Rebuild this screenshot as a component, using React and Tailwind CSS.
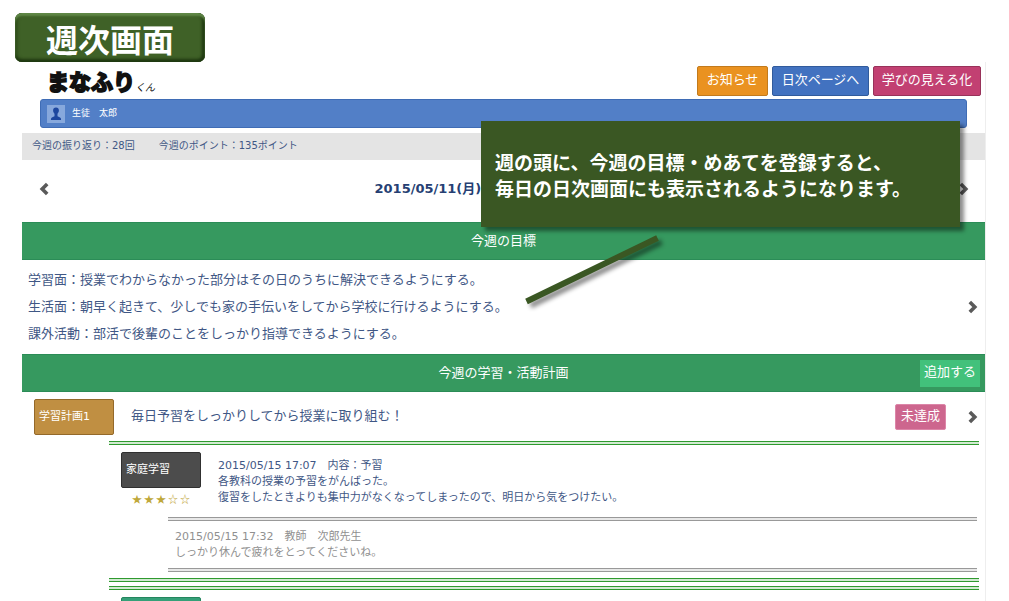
const goals = [
  '学習面：授業でわからなかった部分はその日のうちに解決できるようにする。',
  '生活面：朝早く起きて、少しでも家の手伝いをしてから学校に行けるようにする。',
  '課外活動：部活で後輩のことをしっかり指導できるようにする。',
]

const stars = ['★', '★', '★', '☆', '☆']

function Chevron({ left = false }) {
  return (
    <svg viewBox="0 0 10 14" className="block h-[14px] w-[10px]" fill="none" stroke="#5a5a5a" strokeWidth="3.600" aria-hidden="true">
      <path d={left ? 'M8.200 2 L3.200 7 L8.200 12' : 'M1.800 2 L6.800 7 L1.800 12'} />
    </svg>
  )
}

function NavLink({ className, children }) {
  return (
    <a href="#" className={`flex h-[30px] items-center justify-center rounded-[2px] border pb-[2px] text-[13px] text-white ${className}`}>
      {children}
    </a>
  )
}

function Band({ title, children }) {
  return (
    <div className="relative flex h-[38px] items-center justify-center border-y border-[#2b8c57] bg-[#36995f] text-[13px] text-white">
      <h2>{title}</h2>
      {children}
    </div>
  )
}

function Tag({ className, children }) {
  return (
    <button type="button" className={`block h-9 w-20 rounded-[2px] border pl-1 text-left text-[11px] text-white ${className}`}>
      {children}
    </button>
  )
}

function DoubleRule({ className }) {
  return <div className={`h-1 border-y ${className}`} />
}

export default function App() {
  return (
    <div className="relative h-screen overflow-hidden bg-white font-['DejaVu_Sans','Noto_Sans_CJK_JP',sans-serif] text-[#3f5785]">
      <div className="pl-[15px] pt-[13px]">
        <h1 className="flex h-[49px] w-[190px] items-center justify-center rounded-[7px] bg-[#3f6127] font-['Noto_Sans_CJK_JP',sans-serif] text-[32px] font-bold leading-none text-white shadow-[inset_0_3px_2px_#5f8746,inset_0_-3px_3px_#1f3811,inset_-3px_0_3px_#1f3811,inset_3px_0_3px_#34531f]">
          週次画面
        </h1>
      </div>

      <main className="ml-[22px] mr-[23px] border-r border-[#eeeeee]">
        <header className="flex items-start justify-between pl-[25px] pr-1 pt-1">
          <div className="flex items-end font-['Noto_Sans_CJK_JP',sans-serif] text-[#111111]">
            <span className="text-[22px] font-bold leading-[28px] [-webkit-text-stroke:2px_#111111]">まなふり</span>
            <span className="text-[10px] italic leading-[14px]">くん</span>
          </div>
          <nav className="flex gap-1">
            <NavLink className="w-[71px] border-[#c27a1c] bg-[#ea9220]">お知らせ</NavLink>
            <NavLink className="w-[97px] border-[#315b9c] bg-[#4272c0]">日次ページへ</NavLink>
            <NavLink className="w-[108px] border-[#98325a] bg-[#c24072]">学びの見える化</NavLink>
          </nav>
        </header>

        <div className="ml-[18px] mr-[18px] mt-[3px] flex h-[29px] items-center gap-[7px] rounded-[3px] border border-[#3f6cb5] bg-[#527fc7] pl-[6px] text-[9px] text-white">
          <svg viewBox="0 0 18 18" className="size-[18px]" aria-hidden="true">
            <rect width="18" height="18" fill="#87a8dc" />
            <path d="M9 2.600c1.900 0 2.900 1.300 2.900 3 0 1.500-.7 2.400-1.400 3.100v2.600c1.500.5 3 1.400 3.400 2.100.2.400.2 1 .1 1.600H4c-.1-.6-.1-1.200.1-1.600.4-.7 1.900-1.600 3.400-2.100V8.700C6.800 8 6.100 7.100 6.100 5.600c0-1.700 1-3 2.900-3z" fill="#1d479f" />
          </svg>
          <span>生徒　太郎</span>
        </div>

        <div className="mt-[5px] flex h-[27px] items-center gap-6 bg-[#e4e4e4] pb-[2px] pl-[10px] text-[10px]">
          <span>今週の振り返り：28回</span>
          <span>今週のポイント：135ポイント</span>
        </div>

        <div className="flex h-[62px] items-center pb-1 pl-[17px] pr-4">
          <button type="button" aria-label="前の週"><Chevron left /></button>
          <span className="grow pl-[35%] text-[13px] font-bold text-[#263f73]">2015/05/11(月)</span>
          <button type="button" aria-label="次の週"><Chevron /></button>
        </div>

        <section>
          <Band title="今週の目標" />
          <div className="flex items-center justify-between pb-[7px] pl-[6px] pr-[7px] pt-[6px]">
            <ul className="text-[13px] leading-[27px]">
              {goals.map((goal) => <li key={goal}>{goal}</li>)}
            </ul>
            <button type="button" aria-label="目標の詳細"><Chevron /></button>
          </div>
        </section>

        <section>
          <Band title="今週の学習・活動計画">
            <button type="button" className="absolute right-[5px] h-[27px] w-[60px] bg-[#42c17b] pb-[2px] text-[13px]">追加する</button>
          </Band>

          <div className="flex items-center pl-3 pr-[7px] pt-[7px]">
            <Tag className="border-[#94692a] bg-[#c08f42]">学習計画1</Tag>
            <p className="grow pb-[2px] pl-[17px] text-[13px]">毎日予習をしっかりしてから授業に取り組む！</p>
            <button type="button" className="mr-[22px] h-[26px] w-[51px] rounded-[2px] border border-[#dc86a8] bg-[#cd668e] pb-[2px] text-[13px] text-white">未達成</button>
            <button type="button" aria-label="計画の詳細"><Chevron /></button>
          </div>

          <article className="ml-[87px] mr-[6px] mt-[6px]">
            <DoubleRule className="border-[#2f9a2f] bg-[#d3ead3]" />
            <div className="flex pl-3 pt-[7px]">
              <div className="w-20">
                <Tag className="border-[#303030] bg-[#4c4c4c]">家庭学習</Tag>
                <p className="mt-1 flex justify-center gap-[2px] font-['Noto_Sans_CJK_JP',sans-serif] text-[10px] leading-[14px] text-[#bfa83a]">
                  {stars.map((star, i) => <span key={i}>{star}</span>)}
                </p>
              </div>
              <div className="pl-[17px] pt-[6px] text-[11px] leading-4">
                <p>2015/05/15 17:07　内容：予習</p>
                <p>各教科の授業の予習をがんばった。</p>
                <p>復習をしたときよりも集中力がなくなってしまったので、明日から気をつけたい。</p>
              </div>
            </div>
            <div className="ml-[59px] mr-[2px] mt-[11px]">
              <DoubleRule className="border-[#999999] bg-[#e8e8e8]" />
              <div className="pb-[7px] pl-[7px] pt-2 text-[11px] leading-4 text-[#909090]">
                <p>2015/05/15 17:32　教師　次郎先生</p>
                <p>しっかり休んで疲れをとってくださいね。</p>
              </div>
              <DoubleRule className="border-[#999999] bg-[#e8e8e8]" />
            </div>
            <DoubleRule className="mt-[6px] border-[#2f9a2f] bg-[#d3ead3]" />
          </article>

          <article className="ml-[87px] mr-[6px] mt-1">
            <DoubleRule className="border-[#2f9a2f] bg-[#d3ead3]" />
            <div className="pl-3 pt-[7px]">
              <div className="h-9 w-20 rounded-[2px] border border-[#25865e] bg-[#35a078]" />
            </div>
          </article>
        </section>
      </main>

      <aside className="absolute left-[481px] top-[121px] flex h-[106px] w-[479px] flex-col justify-center bg-[#3a5723] pl-[14px] pt-[2px] font-['Noto_Sans_CJK_JP',sans-serif] text-[19px] font-bold leading-[26px] text-white shadow-[4px_4px_4px_rgba(0,0,0,0.45)]">
        <p>週の頭に、今週の目標・めあてを登録すると、</p>
        <p>毎日の日次画面にも表示されるようになります。</p>
      </aside>
      <svg viewBox="0 0 150 84" className="absolute left-[520px] top-[230px] h-[84px] w-[150px] drop-shadow-[4px_4px_2px_rgba(0,0,0,0.45)]" aria-hidden="true">
        <path d="M6.500 71.500 L137.500 8" stroke="#3a5723" strokeWidth="6" />
      </svg>
    </div>
  )
}
